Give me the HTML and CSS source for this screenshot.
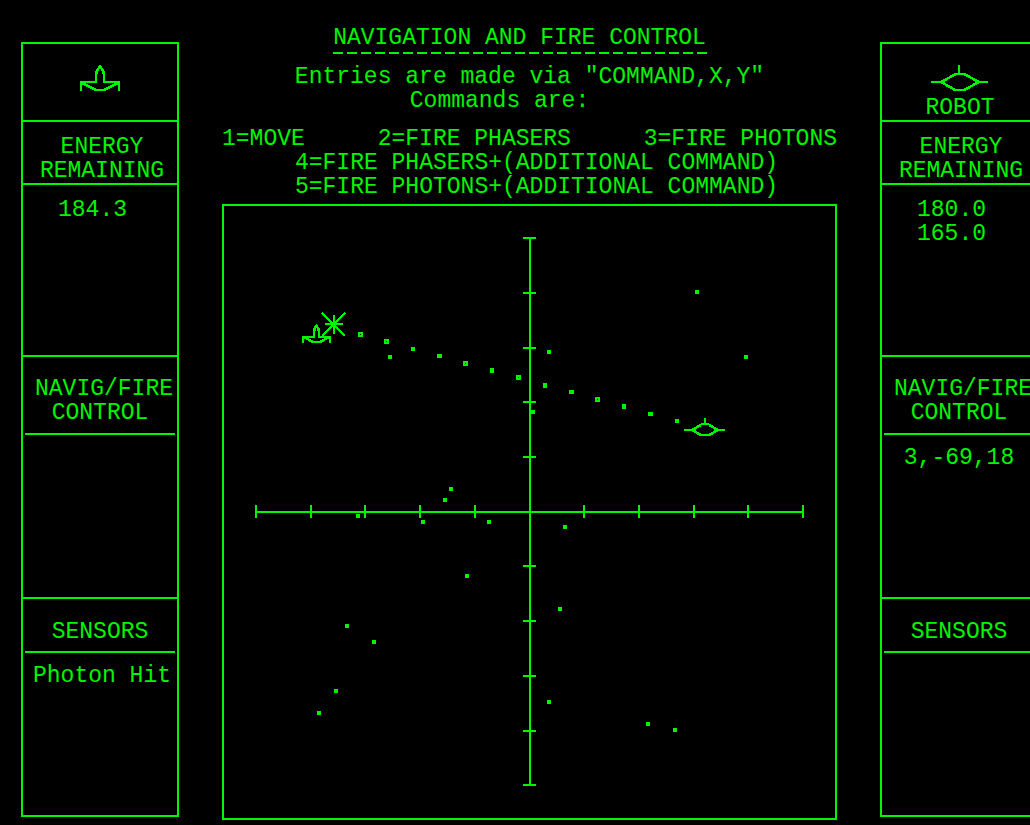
FILE: index.html
```html
<!DOCTYPE html>
<html lang="en">
<head>
<meta charset="utf-8">
<meta name="viewport" content="width=device-width, initial-scale=1">
<title>Navigation and Fire Control</title>
<link rel="stylesheet" href="styles.css">
</head>
<body>
<div class="console">
  <aside class="panel">
    <div class="emblem">
      <svg class="glyph" width="40" height="26" viewBox="0 0 40 26" role="img" aria-label="Ship">
        <path d="M1 26V17H16V8M24 8V17H39V26M16 25H24"/>
        <path class="slant" d="M16 9L17 6L20 1L23 6L24 9M2 18L16 25M24 25L38 18"/>
      </svg>
    </div>
    <h2 class="label label-energy">ENERGY<br>REMAINING</h2>
    <div class="readout readout-energy">184.3</div>
    <h2 class="label label-control"><span class="wide">NAVIG/FIRE</span>CONTROL</h2>
    <div class="readout"></div>
    <h2 class="label label-sensors">SENSORS</h2>
    <div class="readout readout-last readout-sensors">Photon Hit</div>
  </aside>

  <main class="station">
    <header class="header">
      <h1 class="title">NAVIGATION AND FIRE CONTROL</h1>
      <p class="intro">Entries are made via "COMMAND,X,Y"</p>
      <p class="intro intro-list">Commands are:</p>
    </header>
    <ul class="commands">
      <li>1=MOVE</li>
      <li>2=FIRE PHASERS</li>
      <li>3=FIRE PHOTONS</li>
      <li class="full">4=FIRE PHASERS+(ADDITIONAL COMMAND)</li>
      <li class="full">5=FIRE PHOTONS+(ADDITIONAL COMMAND)</li>
    </ul>
    <div class="chart">
      <svg class="glyph map" viewBox="-306 -306 611 612" role="img" aria-label="Sector map">
        <defs>
          <rect id="star" width="4" height="4"/>
          <path id="ring" d="M0 0h5v5h-5zM2 2v1h1v-1z"/>
          <rect id="wide" width="5" height="4"/>
          <rect id="tall" width="4" height="5"/>
        </defs>
        <path d="M-275 0H274M0-275V274"/>
        <path d="M-274-7V6M-219-7V6M-165-7V6M-110-7V6M-55-7V6M54-7V6M109-7V6M164-7V6M218-7V6M273-7V6"/>
        <path d="M-7-274H6M-7-219H6M-7-164H6M-7-110H6M-7-55H6M-7 54H6M-7 109H6M-7 164H6M-7 219H6M-7 273H6"/>
        <g class="dots">
          <use href="#star" x="-81" y="-25"/>
          <use href="#star" x="-87" y="-14"/>
          <use href="#star" x="-174" y="2"/>
          <use href="#star" x="-109" y="8"/>
          <use href="#star" x="-43" y="8"/>
          <use href="#star" x="-65" y="62"/>
          <use href="#star" x="-185" y="112"/>
          <use href="#star" x="-158" y="128"/>
          <use href="#star" x="-196" y="177"/>
          <use href="#star" x="-213" y="199"/>
          <use href="#star" x="165" y="-222"/>
          <use href="#star" x="17" y="-162"/>
          <use href="#star" x="214" y="-157"/>
          <use href="#star" x="1" y="-102"/>
          <use href="#star" x="33" y="13"/>
          <use href="#star" x="28" y="95"/>
          <use href="#star" x="17" y="188"/>
          <use href="#star" x="116" y="210"/>
          <use href="#star" x="143" y="216"/>
          <use href="#star" x="-142" y="-157"/>
        </g>
        <g class="dots">
          <use href="#ring" x="-172" y="-180"/>
          <use href="#ring" x="-146" y="-173"/>
          <use href="#star" x="-119" y="-165"/>
          <use href="#wide" x="-93" y="-158"/>
          <use href="#ring" x="-67" y="-151"/>
          <use href="#tall" x="-40" y="-144"/>
          <use href="#ring" x="-14" y="-137"/>
          <use href="#tall" x="13" y="-129"/>
          <use href="#wide" x="39" y="-122"/>
          <use href="#ring" x="65" y="-115"/>
          <use href="#tall" x="92" y="-108"/>
          <use href="#wide" x="118" y="-100"/>
          <use href="#star" x="145" y="-93"/>
        </g>
        <path d="M-227-169V-175H-216V-182M-211-182V-175H-200V-169M-218-170H-209"/>
        <path class="slant" d="M-216-181L-215-184L-213.5-186L-212-184L-211-181M-226-175L-217-170M-210-170L-201-175"/>
        <path d="M-196-197V-178M-205-188H-187"/>
        <path class="slant" d="M-208-199L-185-176M-185-199L-208-176"/>
        <path d="M154-82H163M187-82H195M171-88H179M170-77H179M175-94V-88"/>
        <path class="slant" d="M162-82L171-87M179-87L188-82M162-82L171-77M179-77L188-82"/>
      </svg>
    </div>
  </main>

  <aside class="panel">
    <div class="emblem">
      <svg class="glyph" width="57" height="26" viewBox="0 0 57 26" aria-hidden="true">
        <path d="M0 17H10M48 17H57M25 9H33M24 25H33M28 0V9"/>
        <path class="slant" d="M10 17L25 9M33 9L48 17M10 17L24 25M33 25L48 17"/>
      </svg>
      <span class="name">ROBOT</span>
    </div>
    <h2 class="label label-energy">ENERGY<br>REMAINING</h2>
    <div class="readout readout-energy">180.0<br>165.0</div>
    <h2 class="label label-control"><span class="wide">NAVIG/FIRE</span>CONTROL</h2>
    <div class="readout">3,-69,18</div>
    <h2 class="label label-sensors">SENSORS</h2>
    <div class="readout readout-last"></div>
  </aside>
</div>
</body>
</html>
```

FILE: styles.css
```css
:root {
  --green: #00f500;
}

* {
  box-sizing: border-box;
}

body {
  margin: 0;
  background: #000;
  color: var(--green);
  font: 23px/24px "Liberation Mono", "Courier New", monospace;
  overflow: hidden;
}

/* The console runs slightly past the right edge of the display. */
.console {
  display: grid;
  grid-template-columns: 158px minmax(0, 1fr) 158px;
  column-gap: 43px;
  align-items: start;
  margin-right: -8px;
  padding-left: 21px;
}

.glyph {
  display: block;
  fill: none;
  stroke: var(--green);
  stroke-width: 2;
  shape-rendering: crispEdges;
}

.slant {
  stroke-width: 2.6;
}

.panel {
  margin-top: 42px;
  border: 2px solid var(--green);
  text-align: center;
  white-space: nowrap;
}

.emblem {
  display: flex;
  flex-direction: column;
  align-items: center;
  gap: 5px;
  height: 78px;
  padding-top: 21px;
  border-bottom: 2px solid var(--green);
}

.name {
  padding-left: 2px;
}

.label {
  margin: 0;
  border-bottom: 2px solid var(--green);
  font-size: inherit;
  font-weight: normal;
}

.label-energy {
  padding: 13px 0 0 4px;
}

.label-control {
  margin: 0 2px;
  padding: 20px 0 8px;
}

.label-control .wide {
  display: block;
  padding-left: 8px;
}

.label-sensors {
  margin: 0 2px;
  padding: 21px 0 7px;
}

.readout {
  min-height: 164px;
  padding-top: 11px;
  border-bottom: 2px solid var(--green);
}

.readout-energy {
  min-height: 172px;
  padding-top: 13px;
  padding-left: 35px;
  text-align: left;
}

.readout-sensors {
  padding-left: 4px;
}

.readout-last {
  min-height: 162px;
  border-bottom: 0;
}

.station {
  padding-top: 26px;
  white-space: nowrap;
}

.header {
  text-align: center;
}

.title {
  width: 374px;
  margin: 0 0 11px calc(50% - 197px);
  padding-bottom: 4px;
  background: repeating-linear-gradient(to right, var(--green) 0 10px, transparent 10px 14px) bottom / 100% 2px no-repeat;
  font-size: inherit;
  font-weight: normal;
}

.intro {
  margin: 0;
}

.intro-list {
  padding-right: 60px;
}

.commands {
  display: flex;
  flex-wrap: wrap;
  justify-content: space-between;
  margin: 14px 0 5px;
  padding: 0;
  list-style: none;
}

.full {
  flex-basis: 100%;
  padding-left: 14px;
  text-align: center;
}

.chart {
  border: 2px solid var(--green);
}

.map {
  width: 100%;
  height: auto;
}

.dots {
  fill: var(--green);
  fill-rule: evenodd;
  stroke: none;
}
```
